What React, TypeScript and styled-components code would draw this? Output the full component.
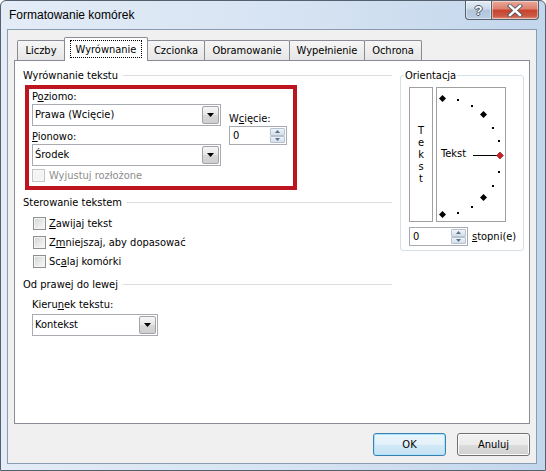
import styled, { createGlobalStyle } from 'styled-components';

const GlobalStyle = createGlobalStyle`
  html, body {
    margin: 0;
    padding: 0;
    background: #ffffff;
  }
  body {
    font-family: "DejaVu Sans Condensed", "Liberation Sans", sans-serif;
    font-size: 11px;
    color: #000000;
  }
  u {
    text-decoration-thickness: 1px;
    text-underline-offset: 1px;
  }
`;

const Window = styled.div`
  width: 546px;
  height: 471px;
  box-sizing: border-box;
  display: flex;
  flex-direction: column;
  border: 1px solid #55606e;
  border-radius: 6px 6px 0 0;
  background: linear-gradient(to right, #e3ecf7 0%, #d6e3f2 55%, #c2d6ec 100%);
  overflow: hidden;
`;

const TitleBar = styled.div`
  height: 28px;
  display: flex;
  align-items: flex-start;
`;

const Title = styled.div`
  flex: 1;
  padding: 7px 0 0 8px;
  font-family: "Liberation Sans", Arial, sans-serif;
  font-size: 12px;
  line-height: 14px;
  color: #000;
`;

const CaptionButtons = styled.div`
  display: flex;
  margin-right: 6px;
`;

const CaptionButton = styled.div<{ $close?: boolean }>`
  width: ${p => (p.$close ? 48 : 27)}px;
  height: 19px;
  box-sizing: border-box;
  border: 1px solid #56616f;
  border-top: none;
  margin-left: ${p => (p.$close ? -1 : 0)}px;
  border-radius: ${p => (p.$close ? '0 0 4px 0' : '0 0 0 4px')};
  background: ${p =>
    p.$close
      ? 'linear-gradient(#e9a99a 0%, #dd7f6c 45%, #c8422d 50%, #cc5a45 85%, #e39a85 100%)'
      : 'linear-gradient(#e4edf6 0%, #cbd9e8 45%, #b3c6db 50%, #b9cde2 100%)'};
  box-shadow: inset 0 0 0 1px rgba(255, 255, 255, 0.45);
  display: flex;
  align-items: center;
  justify-content: center;
  color: #ffffff;
  font-family: "Liberation Sans", Arial, sans-serif;
  font-weight: bold;
  font-size: 13px;
  text-shadow: 1px 0 0 #4a5668, -1px 0 0 #4a5668, 0 1px 0 #4a5668, 0 -1px 0 #4a5668;
`;

const Client = styled.div`
  flex: 1;
  margin: 0 8px 6px 6px;
  border: 1px solid #8a9bb0;
  background: #f0f0f0;
  display: flex;
  flex-direction: column;
  padding: 7px 6px 7px 6px;
  min-height: 0;
`;

const TabStrip = styled.div`
  height: 23px;
  display: flex;
  align-items: flex-end;
  padding-left: 3px;
  position: relative;
  z-index: 1;
`;

const Tab = styled.div<{ $w: number; $active?: boolean }>`
  box-sizing: border-box;
  width: ${p => p.$w}px;
  height: ${p => (p.$active ? 24 : 20)}px;
  margin-right: -1px;
  margin-bottom: ${p => (p.$active ? -1 : 0)}px;
  position: relative;
  z-index: ${p => (p.$active ? 2 : 1)};
  border: 1px solid #898c95;
  border-bottom: none;
  border-radius: 2px 2px 0 0;
  background: ${p => (p.$active ? '#ffffff' : 'linear-gradient(#f6f6f6, #e6e6e6)')};
  display: flex;
  justify-content: center;
  align-items: flex-start;
  padding-top: ${p => (p.$active ? 2 : 3)}px;
  line-height: 14px;
  white-space: nowrap;
`;

const FocusText = styled.span`
  border: 1px dotted #000;
  padding: 1px 5px 0;
  line-height: 15px;
`;

const Panel = styled.div`
  flex: 1;
  background: #ffffff;
  border: 1px solid #898c95;
  display: flex;
  padding: 0 5px 0 8px;
`;

const LeftColumn = styled.div`
  width: 369px;
  padding-top: 8px;
  display: flex;
  flex-direction: column;
`;

const GroupHeader = styled.div`
  display: flex;
  align-items: center;
  height: 13px;
  line-height: 13px;
  white-space: nowrap;

  &::after {
    content: '';
    flex: 1;
    height: 1px;
    margin-left: 5px;
    background: #dadde2;
  }
`;

const RedBox = styled.div`
  box-sizing: border-box;
  width: 272px;
  margin: 3px 0 0 2px;
  border: 4px solid #bd1520;
  padding: 0 6px 1px 3px;
  display: flex;
`;

const FieldColumn = styled.div<{ $w: number; $top?: number; $left?: number }>`
  width: ${p => p.$w}px;
  padding-top: ${p => p.$top ?? 0}px;
  margin-left: ${p => p.$left ?? 0}px;
  display: flex;
  flex-direction: column;
`;

const FieldLabel = styled.div<{ $gap?: number }>`
  height: 15px;
  line-height: 15px;
  margin-top: ${p => p.$gap ?? 0}px;
  white-space: nowrap;
`;

const Combo = styled.div<{ $w: number }>`
  box-sizing: border-box;
  width: ${p => p.$w}px;
  height: 22px;
  border: 1px solid #a9abb2;
  background: #ffffff;
  display: flex;
  align-items: stretch;
`;

const ComboText = styled.div`
  flex: 1;
  padding-left: 2px;
  line-height: 20px;
  white-space: nowrap;
`;

const DropButton = styled.div`
  box-sizing: border-box;
  width: 17px;
  margin: 1px;
  border: 1px solid #a3a3a3;
  border-radius: 2px;
  background: linear-gradient(#f6f6f6, #e6e6e6 50%, #d8d8d8 51%, #cfcfcf);
  display: flex;
  align-items: center;
  justify-content: center;
`;

const SpinBox = styled.div<{ $w: number }>`
  box-sizing: border-box;
  width: ${p => p.$w}px;
  height: 19px;
  border: 1px solid #a9abb2;
  background: #ffffff;
  display: flex;
`;

const SpinText = styled.div`
  flex: 1;
  padding-left: 3px;
  line-height: 17px;
`;

const SpinButtons = styled.div`
  width: 15px;
  margin: 1px;
  display: flex;
  flex-direction: column;
`;

const SpinHalf = styled.div`
  flex: 1;
  box-sizing: border-box;
  border: 1px solid #b7c3d1;
  border-radius: 1px;
  background: linear-gradient(#eef3f8, #d4dee9);
  display: flex;
  align-items: center;
  justify-content: center;
`;

const CheckRow = styled.div<{ $indent?: number; $disabled?: boolean; $h?: number }>`
  display: flex;
  align-items: center;
  height: ${p => p.$h ?? 19}px;
  padding-left: ${p => p.$indent ?? 10}px;
  gap: 3px;
  color: ${p => (p.$disabled ? '#8d8d8d' : '#000')};
  white-space: nowrap;
`;

const CheckBox = styled.div<{ $disabled?: boolean }>`
  box-sizing: border-box;
  width: 13px;
  height: 13px;
  border: 1px solid ${p => (p.$disabled ? '#c4c4c4' : '#8e8f8f')};
  background: ${p =>
    p.$disabled ? '#f4f4f4' : 'linear-gradient(135deg, #cfd2d6 0%, #ebebeb 60%, #f8f8f8 100%)'};
  box-shadow: inset 0 0 0 1px ${p => (p.$disabled ? '#f8f8f8' : '#f4f4f4')};
`;

const OrientationGroup = styled.div`
  position: relative;
  box-sizing: border-box;
  width: 124px;
  height: 176px;
  margin: 14px 0 0 8px;
  border: 1px solid #d5dfe5;
  border-radius: 3px;
  padding: 11px 0 0 8px;
  display: flex;
  flex-direction: column;
`;

const Legend = styled.div`
  position: absolute;
  top: -8px;
  left: 3px;
  padding: 0 1px;
  background: #ffffff;
  line-height: 15px;
`;

const OrientRow = styled.div`
  display: flex;
  gap: 3px;
`;

const VerticalBox = styled.div`
  box-sizing: border-box;
  width: 24px;
  height: 135px;
  border: 1px solid #a0a0a0;
  display: flex;
  flex-direction: column;
  align-items: center;
  justify-content: center;
  line-height: 12px;
`;

const SemiBox = styled.div`
  position: relative;
  box-sizing: border-box;
  width: 70px;
  height: 135px;
  border: 1px solid #a0a0a0;
  display: flex;
  align-items: center;
  padding: 0 0 1px 4px;
`;

const SemiDrawing = styled.svg`
  position: absolute;
  left: 0;
  top: 0;
`;

const SemiLabel = styled.span`
  position: relative;
  line-height: 14px;
`;

const DegreeRow = styled.div`
  display: flex;
  align-items: center;
  margin-top: 5px;
  gap: 4px;
`;

const ButtonRow = styled.div`
  display: flex;
  justify-content: flex-end;
  gap: 11px;
  margin-top: 9px;
`;

const DialogButton = styled.div<{ $default?: boolean }>`
  box-sizing: border-box;
  width: 73px;
  height: 23px;
  border: 1px solid ${p => (p.$default ? '#3c7fb1' : '#707070')};
  border-radius: 3px;
  background: ${p =>
    p.$default
      ? 'linear-gradient(#eaf6fd, #e4f1fa 50%, #d2e9f7 51%, #c6e2f4)'
      : 'linear-gradient(#f2f2f2, #ebebeb 50%, #dddddd 51%, #cfcfcf)'};
  box-shadow: inset 0 0 0 1px ${p => (p.$default ? '#a8e4fb' : '#fbfbfb')};
  display: flex;
  align-items: center;
  justify-content: center;
  line-height: 14px;
`;

const Arrow = ({ up, color = '#000' }: { up?: boolean; color?: string }) => (
  <svg width="7" height="4" viewBox="0 0 7 4">
    <path d={up ? 'M0 4L3.5 0L7 4Z' : 'M0 0L7 0L3.5 4Z'} fill={color} />
  </svg>
);

const SmallArrow = ({ up }: { up?: boolean }) => (
  <svg width="5" height="3" viewBox="0 0 5 3">
    <path d={up ? 'M0 3L2.5 0L5 3Z' : 'M0 0L5 0L2.5 3Z'} fill="#56718f" />
  </svg>
);

function Select({ width, value }: { width: number; value: string }) {
  return (
    <Combo $w={width}>
      <ComboText>{value}</ComboText>
      <DropButton>
        <Arrow />
      </DropButton>
    </Combo>
  );
}

function Spinner({ width, value }: { width: number; value: string }) {
  return (
    <SpinBox $w={width}>
      <SpinText>{value}</SpinText>
      <SpinButtons>
        <SpinHalf>
          <SmallArrow up />
        </SpinHalf>
        <SpinHalf>
          <SmallArrow />
        </SpinHalf>
      </SpinButtons>
    </SpinBox>
  );
}

const CX = 5;
const CY = 67.5;
const R = 58;
const pt = (deg: number) => {
  const a = (deg * Math.PI) / 180;
  return [CX + R * Math.cos(a), CY - R * Math.sin(a)];
};
const diamond = (x: number, y: number, s = 3.5) =>
  `M${x} ${y - s}L${x + s} ${y}L${x} ${y + s}L${x - s} ${y}Z`;

function SemiCircle() {
  const big = [90, 45, -45, -90].map(pt);
  const small = [75, 60, 30, 15, -15, -30, -60, -75].map(pt);
  const [rx, ry] = pt(0);
  return (
    <SemiDrawing width="68" height="133" viewBox="0 0 68 133">
      {big.map(([x, y], i) => (
        <path key={i} d={diamond(Math.round(x) + 0.5, Math.round(y) + 0.5)} fill="#000" />
      ))}
      {small.map(([x, y], i) => (
        <rect key={i} x={Math.round(x)} y={Math.round(y)} width="2" height="2" fill="#000" />
      ))}
      <line x1="36" y1="67.5" x2="60" y2="67.5" stroke="#000" strokeWidth="1" />
      <path d={diamond(Math.round(rx), ry)} fill="#c8212a" stroke="#8a1118" strokeWidth="0.6" />
    </SemiDrawing>
  );
}

export default function App() {
  return (
    <>
      <GlobalStyle />
      <Window>
        <TitleBar>
          <Title>Formatowanie komórek</Title>
          <CaptionButtons>
            <CaptionButton>?</CaptionButton>
            <CaptionButton $close>
              <svg width="16" height="13" viewBox="0 0 16 13">
                <path d="M3 2L13 11M13 2L3 11" stroke="#4a5668" strokeWidth="4.2" strokeLinecap="square" />
                <path d="M3 2L13 11M13 2L3 11" stroke="#ffffff" strokeWidth="2.4" strokeLinecap="square" />
              </svg>
            </CaptionButton>
          </CaptionButtons>
        </TitleBar>
        <Client>
          <TabStrip>
            <Tab $w={48}>Liczby</Tab>
            <Tab $w={84} $active>
              <FocusText>Wyrównanie</FocusText>
            </Tab>
            <Tab $w={58}>Czcionka</Tab>
            <Tab $w={86}>Obramowanie</Tab>
            <Tab $w={76}>Wypełnienie</Tab>
            <Tab $w={58}>Ochrona</Tab>
          </TabStrip>
          <Panel>
            <LeftColumn>
              <GroupHeader>Wyrównanie tekstu</GroupHeader>
              <RedBox>
                <FieldColumn $w={189}>
                  <FieldLabel>
                    P<u>o</u>ziomo:
                  </FieldLabel>
                  <Select width={189} value="Prawa (Wcięcie)" />
                  <FieldLabel $gap={3}>
                    <u>P</u>ionowo:
                  </FieldLabel>
                  <Select width={189} value="Środek" />
                  <CheckRow $indent={0} $disabled $h={19}>
                    <CheckBox $disabled />
                    <span style={{ marginLeft: 1 }}>Wyjustuj rozłożone</span>
                  </CheckRow>
                </FieldColumn>
                <FieldColumn $w={58} $top={22} $left={8}>
                  <FieldLabel>
                    W<u>c</u>ięcie:
                  </FieldLabel>
                  <Spinner width={58} value="0" />
                </FieldColumn>
              </RedBox>
              <GroupHeader style={{ marginTop: 6 }}>Sterowanie tekstem</GroupHeader>
              <div style={{ marginTop: 5 }}>
                <CheckRow>
                  <CheckBox />
                  <span>
                    <u>Z</u>awijaj tekst
                  </span>
                </CheckRow>
                <CheckRow>
                  <CheckBox />
                  <span>
                    Z<u>m</u>niejszaj, aby dopasować
                  </span>
                </CheckRow>
                <CheckRow>
                  <CheckBox />
                  <span>
                    Sc<u>a</u>laj komórki
                  </span>
                </CheckRow>
              </div>
              <GroupHeader style={{ marginTop: 7 }}>Od prawej do lewej</GroupHeader>
              <FieldColumn $w={126} $left={9} $top={6}>
                <FieldLabel>
                  Kieru<u>n</u>ek tekstu:
                </FieldLabel>
                <div style={{ marginTop: 2 }}>
                  <Select width={126} value="Kontekst" />
                </div>
              </FieldColumn>
            </LeftColumn>
            <OrientationGroup>
              <Legend>Orientacja</Legend>
              <OrientRow>
                <VerticalBox>
                  <span>T</span>
                  <span>e</span>
                  <span>k</span>
                  <span>s</span>
                  <span>t</span>
                </VerticalBox>
                <SemiBox>
                  <SemiCircle />
                  <SemiLabel>Tekst</SemiLabel>
                </SemiBox>
              </OrientRow>
              <DegreeRow>
                <Spinner width={59} value="0" />
                <span>
                  <u>s</u>topni(e)
                </span>
              </DegreeRow>
            </OrientationGroup>
          </Panel>
          <ButtonRow>
            <DialogButton $default>OK</DialogButton>
            <DialogButton>Anuluj</DialogButton>
          </ButtonRow>
        </Client>
      </Window>
    </>
  );
}
